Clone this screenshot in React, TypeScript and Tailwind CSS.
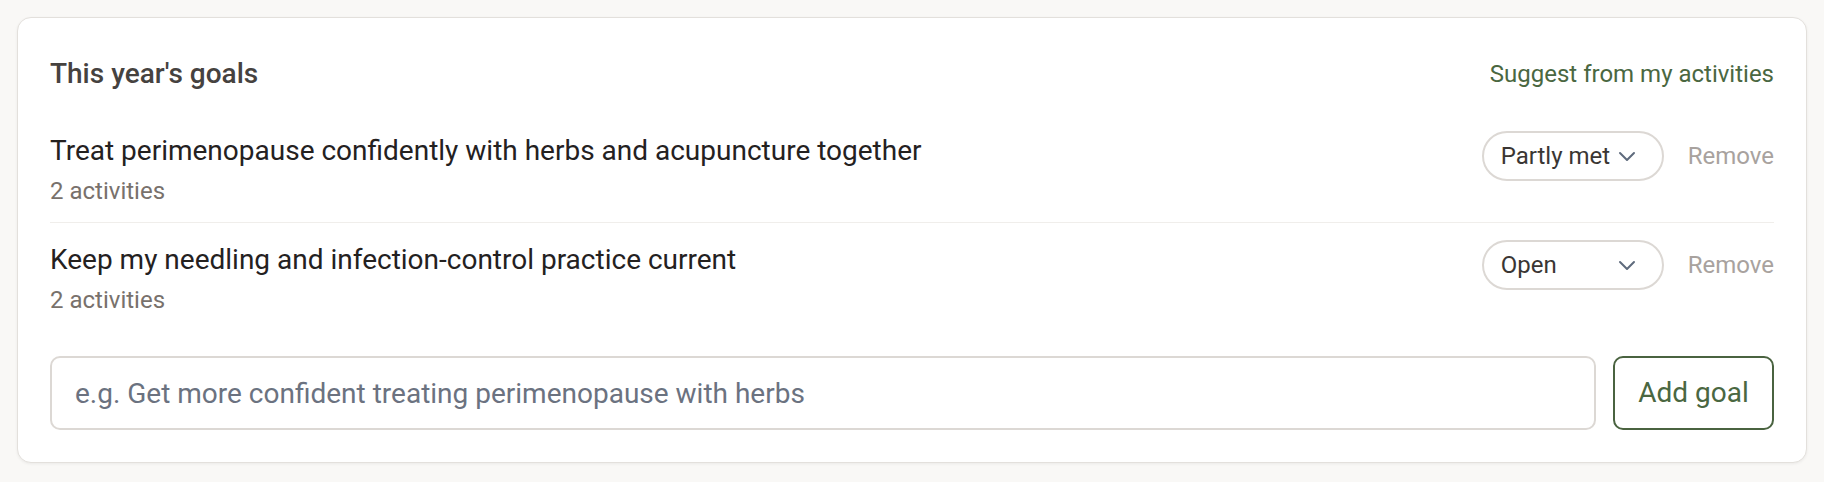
type Goal = { title: string; activities: number; status: string }

const goals: Goal[] = [
  { title: "Treat perimenopause confidently with herbs and acupuncture together", activities: 2, status: "Partly met" },
  { title: "Keep my needling and infection-control practice current", activities: 2, status: "Open" },
]

function Chevron() {
  return (
    <svg width="20" height="12" viewBox="0 0 20 12" fill="none" className="shrink-0">
      <path d="M3 3 L10 10 L17 3" stroke="#5f6b7d" strokeWidth="2" strokeLinecap="round" strokeLinejoin="round" />
    </svg>
  )
}

function StatusPill({ value }: { value: string }) {
  return (
    <div className="flex h-[50px] w-[182px] shrink-0 items-center justify-between rounded-full border-2 border-[#dcd8d4] bg-white pl-[17px] pr-[25px] text-[24px] text-[#3a3633]">
      <span>{value}</span>
      <Chevron />
    </div>
  )
}

function GoalRow({ goal, last }: { goal: Goal; last: boolean }) {
  return (
    <div className={`flex items-start justify-between gap-6 py-[16px] ${last ? "" : "border-b border-[#f0eeeb]"}`}>
      <div className="flex min-w-0 flex-col">
        <span className="text-[28px] leading-[42px] text-[#24211f]">{goal.title}</span>
        <span className="mt-[4px] text-[24px] leading-[30px] text-[#78716c]">{goal.activities} activities</span>
      </div>
      <div className="mt-[1px] flex items-center gap-[24px]">
        <StatusPill value={goal.status} />
        <button className="text-[24px] leading-[30px] text-[#a8a29e]">Remove</button>
      </div>
    </div>
  )
}

export default function App() {
  return (
    <div className="min-h-[482px] bg-[#f9f8f6] p-[17px] font-['Roboto',sans-serif]">
      <div className="rounded-[14px] border border-[#e3e0dc] bg-white px-[32px] pb-[32px] pt-[35px] shadow-[0_1px_3px_rgba(0,0,0,0.06)]">
        <div className="flex items-center justify-between">
          <h2 className="text-[28px] font-medium leading-[42px] text-[#46423f]">This year's goals</h2>
          <button className="text-[24px] leading-[30px] text-[#4a6741]">Suggest from my activities</button>
        </div>

        <div className="mt-[19px] flex flex-col">
          {goals.map((g, i) => (
            <GoalRow key={g.title} goal={g} last={i === goals.length - 1} />
          ))}
        </div>

        <div className="mt-[25px] flex items-stretch gap-[17px]">
          <input
            className="h-[74px] min-w-0 flex-1 rounded-[10px] border-2 border-[#dcd8d4] bg-white px-[23px] text-[28px] text-[#24211f] outline-none placeholder:text-[#6b7280]"
            placeholder="e.g. Get more confident treating perimenopause with herbs"
          />
          <button className="h-[74px] w-[161px] shrink-0 rounded-[10px] border-2 border-[#4a6340] bg-white text-[28px] text-[#4a6741]">
            Add goal
          </button>
        </div>
      </div>
    </div>
  )
}
